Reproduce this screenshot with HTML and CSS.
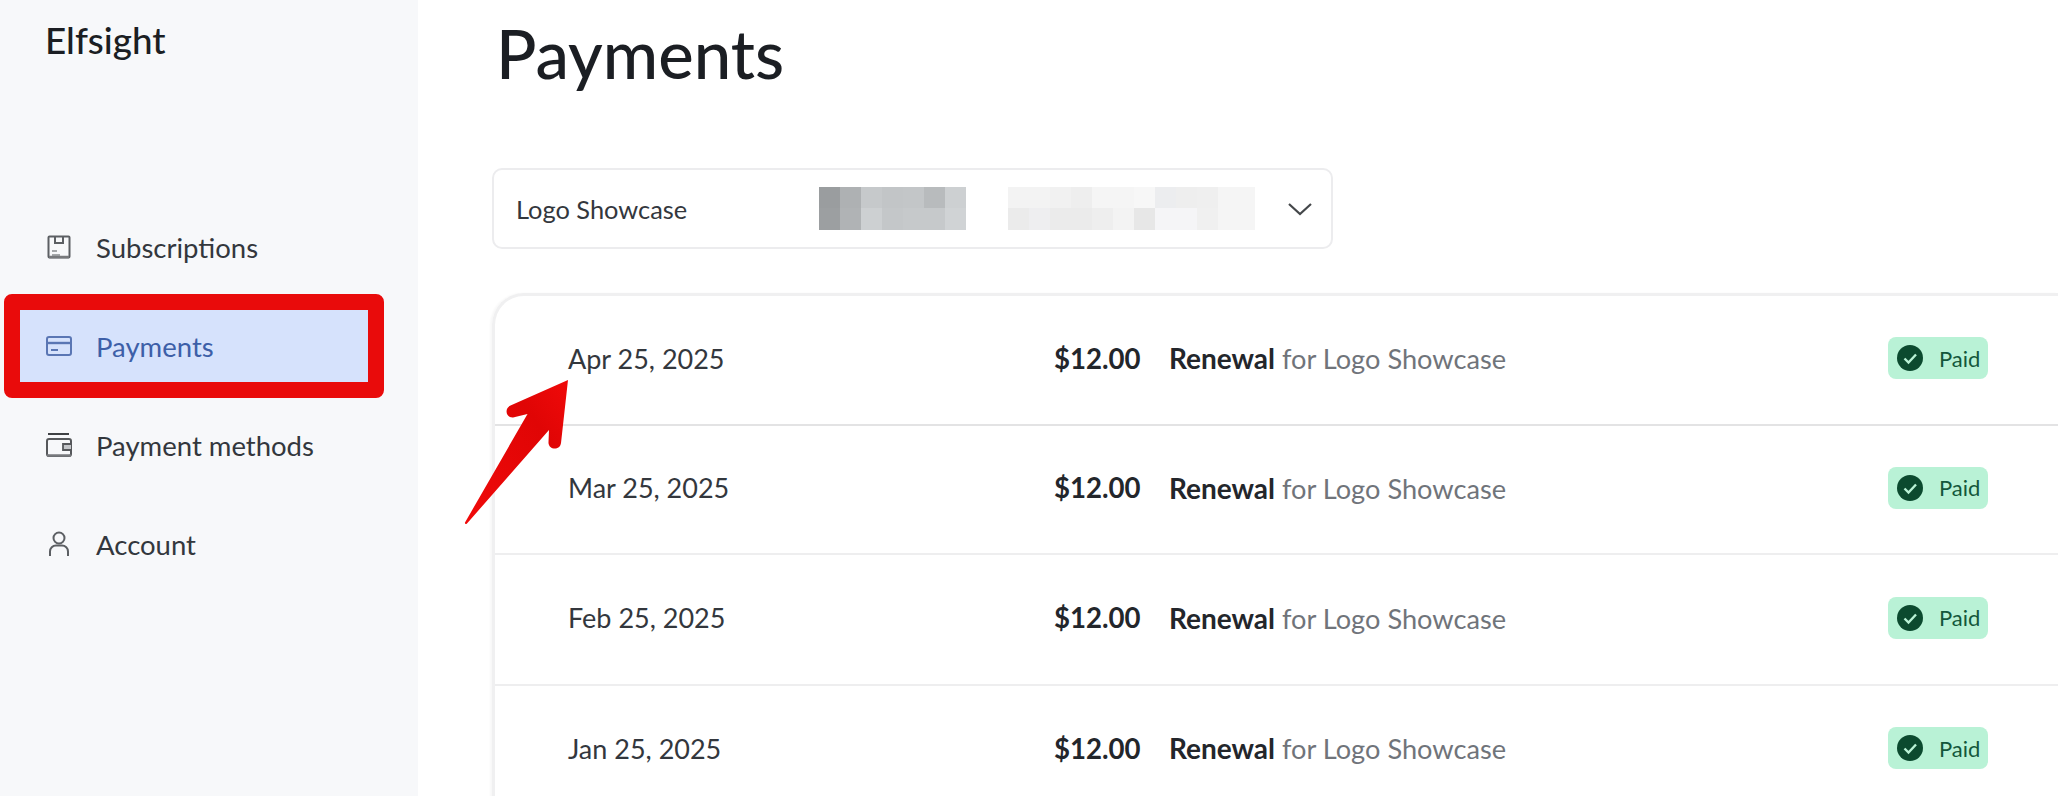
FILE: index.html
```html
<!DOCTYPE html>
<html lang="en">
<head>
<meta charset="utf-8">
<title>Payments</title>
<link rel="stylesheet" href="styles.css">
</head>
<body>
<div class="app">
  <aside class="sidebar">
    <div class="brand">Elfsight</div>
    <nav class="nav">
      <a class="nav-item">
        <svg class="nav-icon" viewBox="0 0 26 26" fill="none" stroke="#5c5f63" stroke-width="2"><path d="M3.5 2.5h19a1 1 0 0 1 1 1v19a1 1 0 0 1-1 1h-19a1 1 0 0 1-1-1v-19a1 1 0 0 1 1-1z"/><path d="M9 3v6h8V3"/><path d="M6 17h5M6 21h8" stroke-width="1.6" stroke="#8a8d90"/><path d="M3 23h20" stroke-width="2.5" stroke="#77797c"/></svg>
        <span>Subscriptions</span>
      </a>
      <a class="nav-item is-active">
        <svg class="nav-icon" viewBox="0 0 26 26" fill="none" stroke="#5a76b4" stroke-width="2"><rect x="1" y="4" width="24" height="18" rx="2"/><path d="M1 10h24" stroke-width="2.4"/><path d="M5 17h7"/></svg>
        <span>Payments</span>
        <i class="annotation-box"></i>
      </a>
      <a class="nav-item">
        <svg class="nav-icon" viewBox="0 0 26 26" fill="none" stroke="#56585b" stroke-width="2"><path d="M2 2h21" stroke="#3f4144"/><rect x="1" y="7" width="24" height="17" rx="2"/><path d="M1 23.500h24" stroke-width="2.500" stroke="#77797c"/><path d="M25 12h-8v6h8" fill="#c4c6c9" stroke-width="1.800"/></svg>
        <span>Payment methods</span>
      </a>
      <a class="nav-item">
        <svg class="nav-icon" viewBox="0 0 26 26" fill="none" stroke="#5c5f63" stroke-width="2"><circle cx="13" cy="7" r="5.500"/><path d="M4 25v-4.500a6 6 0 0 1 6-6h6a6 6 0 0 1 6 6V25"/></svg>
        <span>Account</span>
      </a>
    </nav>
  </aside>

  <main class="main">
    <h1 class="title">Payments</h1>

    <div class="select">
      <span class="select-label">Logo Showcase</span>
      <svg class="redacted" width="436" height="43" viewBox="0 0 436 43" shape-rendering="crispEdges">
        <rect x="0" y="0" width="21" height="21" fill="#9a9d9f"/><rect x="21" y="0" width="21" height="21" fill="#aeb1b3"/><rect x="42" y="0" width="21" height="21" fill="#c6c9cb"/><rect x="63" y="0" width="21" height="21" fill="#c2c5c7"/><rect x="84" y="0" width="21" height="21" fill="#c3c6c8"/><rect x="105" y="0" width="21" height="21" fill="#b8bbbd"/><rect x="126" y="0" width="21" height="21" fill="#cdd0d2"/>
        <rect x="0" y="21" width="21" height="22" fill="#9c9fa1"/><rect x="21" y="21" width="21" height="22" fill="#b0b3b5"/><rect x="42" y="21" width="21" height="22" fill="#cdd0d2"/><rect x="63" y="21" width="21" height="22" fill="#c4c7c9"/><rect x="84" y="21" width="21" height="22" fill="#c6c9cb"/><rect x="105" y="21" width="21" height="22" fill="#c6c9cb"/><rect x="126" y="21" width="21" height="22" fill="#d0d3d5"/>
        <rect x="189" y="0" width="42" height="21" fill="#f3f3f3"/><rect x="231" y="0" width="21" height="21" fill="#f1f1f1"/><rect x="252" y="0" width="21" height="21" fill="#eeeeee"/><rect x="273" y="0" width="42" height="21" fill="#f5f5f5"/><rect x="315" y="0" width="21" height="21" fill="#f7f7f7"/><rect x="336" y="0" width="21" height="21" fill="#ecedef"/><rect x="357" y="0" width="21" height="21" fill="#eeeeee"/><rect x="378" y="0" width="21" height="21" fill="#efefef"/><rect x="399" y="0" width="37" height="21" fill="#f5f5f5"/>
        <rect x="189" y="21" width="21" height="22" fill="#ebebeb"/><rect x="210" y="21" width="21" height="22" fill="#eeeef0"/><rect x="231" y="21" width="42" height="22" fill="#ebebeb"/><rect x="273" y="21" width="21" height="22" fill="#eeeeee"/><rect x="294" y="21" width="21" height="22" fill="#f3f3f3"/><rect x="315" y="21" width="21" height="22" fill="#e7e7e7"/><rect x="336" y="21" width="42" height="22" fill="#f5f5f7"/><rect x="378" y="21" width="21" height="22" fill="#f0f0f0"/><rect x="399" y="21" width="37" height="22" fill="#f5f5f5"/>
      </svg>
      <svg class="chevron" width="26" height="14" viewBox="0 0 26 14" fill="none" stroke="#44474a" stroke-width="2.200"><path d="M2 2l11 10L24 2"/></svg>
    </div>

    <section class="card">
      <div class="row">
        <span class="date">Apr 25, 2025</span>
        <span class="price">$12.00</span>
        <span class="desc"><b>Renewal</b> for Logo Showcase</span>
        <span class="badge"><svg class="badge-icon" viewBox="0 0 26 26"><circle cx="13" cy="13" r="13" fill="#0c4a2f"/><path d="M7.500 13.500l4 4 7.500-8" fill="none" stroke="#b9f2d6" stroke-width="2.400"/></svg>Paid</span>
      </div>
      <div class="row">
        <span class="date">Mar 25, 2025</span>
        <span class="price">$12.00</span>
        <span class="desc"><b>Renewal</b> for Logo Showcase</span>
        <span class="badge"><svg class="badge-icon" viewBox="0 0 26 26"><circle cx="13" cy="13" r="13" fill="#0c4a2f"/><path d="M7.500 13.500l4 4 7.500-8" fill="none" stroke="#b9f2d6" stroke-width="2.400"/></svg>Paid</span>
      </div>
      <div class="row">
        <span class="date">Feb 25, 2025</span>
        <span class="price">$12.00</span>
        <span class="desc"><b>Renewal</b> for Logo Showcase</span>
        <span class="badge"><svg class="badge-icon" viewBox="0 0 26 26"><circle cx="13" cy="13" r="13" fill="#0c4a2f"/><path d="M7.500 13.500l4 4 7.500-8" fill="none" stroke="#b9f2d6" stroke-width="2.400"/></svg>Paid</span>
      </div>
      <div class="row">
        <span class="date">Jan 25, 2025</span>
        <span class="price">$12.00</span>
        <span class="desc"><b>Renewal</b> for Logo Showcase</span>
        <span class="badge"><svg class="badge-icon" viewBox="0 0 26 26"><circle cx="13" cy="13" r="13" fill="#0c4a2f"/><path d="M7.500 13.500l4 4 7.500-8" fill="none" stroke="#b9f2d6" stroke-width="2.400"/></svg>Paid</span>
      </div>
    </section>
  </main>

  <svg class="arrow" width="110" height="150" viewBox="460 376 110 150">
    <defs>
      <linearGradient id="arrow-fill" x1="0" y1="1" x2="1" y2="0">
        <stop offset="0" stop-color="#f00a0a"/>
        <stop offset="0.7" stop-color="#e00505"/>
        <stop offset="1" stop-color="#f00a0a"/>
      </linearGradient>
    </defs>
    <path d="M568 380L510.500 405.500C504 408.500 506 418 513 417.500L527.500 414L465 522.500C464.500 524 466 524.500 467 523.500L549 430L548.500 442C548 450 560 451 561 443Z" fill="url(#arrow-fill)"/>
  </svg>
</div>
</body>
</html>
```

FILE: styles.css
```css
* { box-sizing: border-box; }

html, body {
  margin: 0;
  height: 100%;
  background: #ffffff;
}

body {
  font-family: Lato, "Liberation Sans", sans-serif;
  color: #23262b;
  overflow: hidden;
}

.app {
  position: relative;
  display: flex;
  height: 796px;
  overflow: hidden;
}

.sidebar {
  flex: 0 0 418px;
  background: #f7f8fa;
}

.brand {
  padding: 20px 0 0 45px;
  height: 211px;
  font-size: 36.8px;
  line-height: 40px;
  font-weight: 500;
  color: #1b1e23;
}

.nav {
  display: flex;
  flex-direction: column;
  gap: 27px;
  margin-left: 20px;
  width: 348px;
}

.nav-item {
  position: relative;
  display: flex;
  align-items: center;
  gap: 24px;
  height: 72px;
  padding-left: 26px;
  font-size: 27.5px;
  color: #33373d;
}

.nav-icon {
  flex: 0 0 26px;
  width: 26px;
  height: 26px;
}

.is-active {
  background: #d6e2fc;
  color: #3d5fa8;
}

.annotation-box {
  position: absolute;
  inset: -16px;
  border: 16px solid #e90b0b;
  border-radius: 8px;
}

.main {
  flex: 1;
  min-width: 0;
  padding: 0 0 0 74px;
}

.title {
  margin: 0;
  height: 168px;
  padding-top: 14px;
  padding-left: 4px;
  font-size: 67px;
  line-height: 78px;
  font-weight: 500;
  color: #1b1e23;
}

.select {
  display: flex;
  align-items: center;
  width: 841px;
  height: 81px;
  padding-left: 22px;
  border: 2px solid #ececee;
  border-radius: 10px;
  font-size: 25.4px;
  color: #33373d;
}

.select-label {
  flex: 0 0 303px;
}

.redacted {
  flex: 0 0 436px;
}

.chevron {
  margin-left: 32px;
}

.card {
  margin-top: 44px;
  border: solid #f0f0f1;
  border-width: 3px 0 0 3px;
  border-top-left-radius: 32px;
  box-shadow: -2px 0 2px rgba(0, 0, 0, 0.03);
}

.row {
  display: grid;
  grid-template-columns: 486px 115px 719px auto;
  align-items: center;
  justify-content: start;
  height: 130px;
  padding: 0 0 4px 73px;
  border-bottom: 2px solid #eeeeef;
  color: #33373d;
}

.row:first-child {
  border-bottom-color: #e3e3e4;
}

.row:nth-child(2) {
  height: 129px;
}

.row:nth-child(3) {
  height: 131px;
}

.date {
  font-size: 27px;
}

.price,
.desc b {
  font-weight: 700;
  color: #23262b;
}

.price {
  font-size: 27.6px;
}

.desc {
  font-size: 27.2px;
  color: #70747a;
}

.desc b {
  font-size: 28px;
}

.badge {
  display: inline-flex;
  align-items: center;
  gap: 16px;
  width: 100px;
  height: 42px;
  padding-left: 9px;
  border-radius: 8px;
  background: #b9f2d6;
  font-size: 22px;
  color: #14573b;
}

.badge-icon {
  flex: 0 0 26px;
  width: 26px;
  height: 26px;
}

.arrow {
  position: absolute;
  left: 460px;
  top: 376px;
}
```
